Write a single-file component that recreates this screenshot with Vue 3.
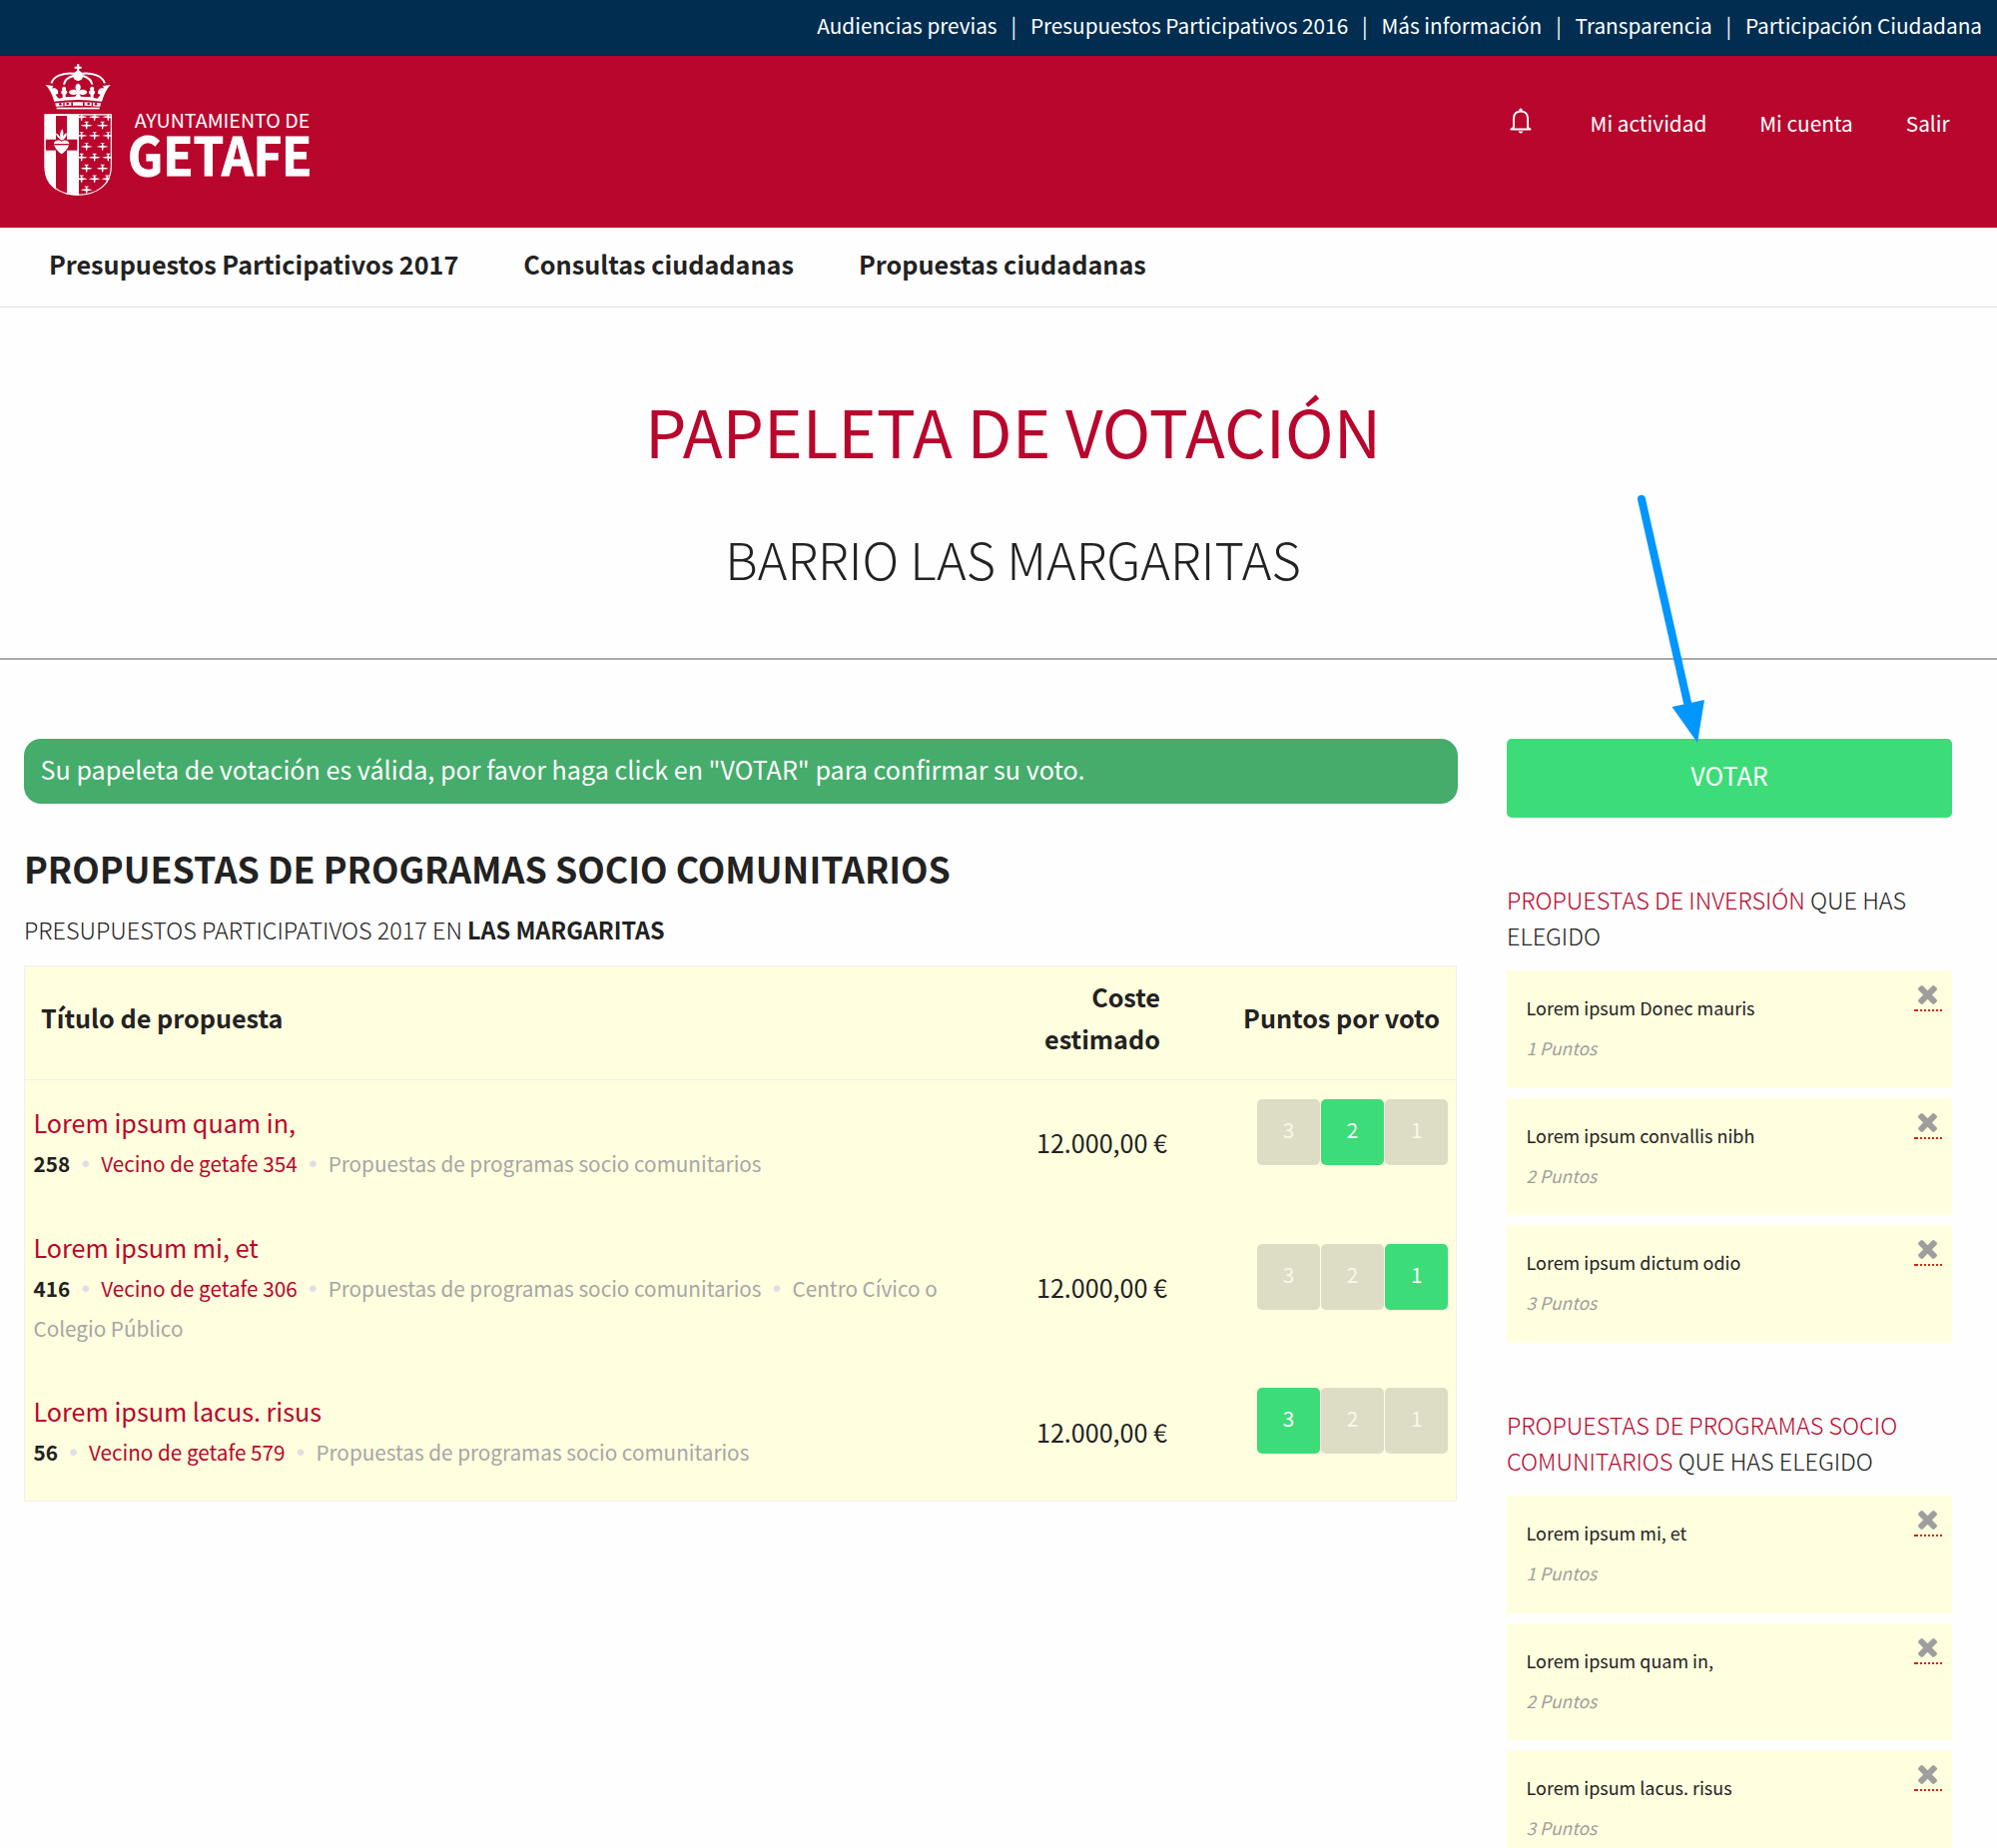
<script setup>
const topLinks = [
  'Audiencias previas',
  'Presupuestos Participativos 2016',
  'Más información',
  'Transparencia',
  'Participación Ciudadana',
]

const sections = ['Presupuestos Participativos 2017', 'Consultas ciudadanas', 'Propuestas ciudadanas']

const program = 'Propuestas de programas socio comunitarios'

const proposals = [
  { title: 'Lorem ipsum quam in,', id: 258, author: 'Vecino de getafe 354', tags: [program], price: '12.000,00 €', vote: 2 },
  { title: 'Lorem ipsum mi, et', id: 416, author: 'Vecino de getafe 306', tags: [program, 'Centro Cívico o Colegio Público'], price: '12.000,00 €', vote: 1 },
  { title: 'Lorem ipsum lacus. risus', id: 56, author: 'Vecino de getafe 579', tags: [program], price: '12.000,00 €', vote: 3 },
]

const ballots = [
  {
    name: 'PROPUESTAS DE INVERSIÓN',
    items: [
      { title: 'Lorem ipsum Donec mauris', points: 1 },
      { title: 'Lorem ipsum convallis nibh', points: 2 },
      { title: 'Lorem ipsum dictum odio', points: 3 },
    ],
  },
  {
    name: 'PROPUESTAS DE PROGRAMAS SOCIO COMUNITARIOS',
    items: [
      { title: 'Lorem ipsum mi, et', points: 1 },
      { title: 'Lorem ipsum quam in,', points: 2 },
      { title: 'Lorem ipsum lacus. risus', points: 3 },
    ],
  },
]

// Aeroplanes on the right half of the coat of arms
const planes = [
  [245, 232], [284, 232], [325, 232],
  [260, 257], [308, 257],
  [245, 288], [284, 288], [325, 288],
  [260, 321], [308, 321],
  [245, 353], [284, 353], [325, 353],
  [260, 386], [308, 386],
  [245, 418], [284, 418], [322, 418],
  [260, 451],
]
</script>

<template>
  <div class="page">
    <div class="topbar">
      <template v-for="(link, i) in topLinks" :key="link">
        <span v-if="i" class="sep">|</span>
        <a>{{ link }}</a>
      </template>
    </div>

    <header class="header">
      <svg class="logo" viewBox="0 48 960 516" width="320" height="172">
        <defs>
          <clipPath id="shield">
            <path d="M133 223H336V380C336 438 292 467 235 467C177 467 133 438 133 380Z" />
          </clipPath>
          <g id="plane">
            <path d="M-18 0Q-10 -3 -2.500 -3L-2 -8L-6 -9.500V-11.500H6V-9.500L2 -8L2.500 -3Q10 -3 18 0Q10 2.500 2.500 2.500L2 9L0 12L-2 9L-2.500 2.500Q-10 2.500 -18 0Z" />
          </g>
        </defs>
        <g fill="#fff">
          <path d="M231 73h7v7h7v6h-7v10h-7v-10h-7v-6h7z" />
          <circle cx="234.500" cy="108" r="15" />
          <g fill="none" stroke="#fff" stroke-width="6">
            <path d="M154 130C162 108 190 98 222 101" />
            <path d="M315 130C307 108 279 98 247 101" />
            <path d="M192 134C194 121 204 112 222 107" />
            <path d="M277 134C275 121 265 112 247 107" />
          </g>
          <path d="M137 135L160 138L156 146C166 141 178 150 174 162L167 164Q172 172 177 176L188 174V164C182 161 182 154 187 152C185 143 188 140 192 140C197 140 200 143 198 152C204 154 203 161 197 164V172L226 170L231 161C224 168 208 165 207 157C209 149 224 147 231 153C223 143 227 133 234.500 131C242 133 246 143 238 153C245 147 260 149 262 157C261 165 245 168 238 161L243 170L272 172V164C266 161 265 154 271 152C269 143 272 140 277 140C281 140 284 143 282 152C287 154 287 161 281 164V174L292 176Q297 172 302 164L295 162C291 150 303 141 313 146L309 138L332 135Q316 151 306 185Q234.500 175 163 185Q153 151 137 135Z" />
          <path d="M166 190Q234 184 303 190L301 200Q234 195 168 200Z" />
          <g fill="#b9062d">
            <circle cx="181" cy="193" r="4" /><circle cx="203" cy="192" r="4" />
            <circle cx="266" cy="192" r="4" /><circle cx="288" cy="193" r="4" />
            <rect x="190" y="187" width="4" height="11" /><rect x="214" y="187" width="5" height="11" />
            <rect x="249" y="187" width="5" height="11" /><rect x="275" y="187" width="4" height="11" />
          </g>
          <rect x="170" y="203" width="129" height="5" />
          <g clip-path="url(#shield)">
            <rect x="133" y="223" width="104" height="245" />
            <g fill="#b9062d">
              <rect x="168" y="228" width="33" height="234" />
              <rect x="137" y="299" width="95" height="33" />
            </g>
            <path d="M185 343C176 336 163 325 162 311C163 302 178 298 185 305C193 298 206 302 208 311C207 325 194 336 185 343Z" />
            <path d="M184 301C172 293 168 287 169 280C176 285 181 290 183 298C178 286 180 277 187 268C192 276 191 286 187 296C189 288 193 282 200 279C201 288 196 296 188 301Z" />
            <rect x="163" y="312" width="45" height="4" fill="#b9062d" />
            <use v-for="([x, y], i) in planes" :key="i" href="#plane" :x="x" :y="y" />
          </g>
          <path d="M135 224.500H334V380C334 436 290 465.500 235 465.500C179 465.500 135 436 135 380Z" fill="none" stroke="#fff" stroke-width="3.500" />
          <text class="logo-top" x="404" y="265" textLength="527" lengthAdjust="spacingAndGlyphs">AYUNTAMIENTO DE</text>
          <text class="logo-name" x="384" y="409" textLength="553" lengthAdjust="spacingAndGlyphs">GETAFE</text>
        </g>
      </svg>
      <nav class="account">
        <svg class="bell" viewBox="0 0 24 28" width="24" height="28" fill="none" stroke="#fff" stroke-width="2">
          <path d="M5 20.500V11.500C5 7 8 4.500 12 4.500S19 7 19 11.500V20.500L21.500 22.500H2.500Z" stroke-linejoin="round" />
          <path d="M10.500 4V2.200Q12 .6 13.500 2.200V4ZM9.500 24.500H14.500Q13.500 26.500 12 26.500T9.500 24.500Z" fill="#fff" stroke="none" />
        </svg>
        <a>Mi actividad</a>
        <a>Mi cuenta</a>
        <a>Salir</a>
      </nav>
    </header>

    <nav class="sections">
      <a v-for="s in sections" :key="s">{{ s }}</a>
    </nav>

    <div class="hero">
      <h1>PAPELETA DE VOTACIÓN</h1>
      <h2>BARRIO LAS MARGARITAS</h2>
    </div>

    <div class="content">
      <main class="main">
        <div class="notice">Su papeleta de votación es válida, por favor haga click en "VOTAR" para confirmar su voto.</div>
        <h3>PROPUESTAS DE PROGRAMAS SOCIO COMUNITARIOS</h3>
        <p class="subtitle">PRESUPUESTOS PARTICIPATIVOS 2017 EN <strong>LAS MARGARITAS</strong></p>

        <div class="table">
          <div class="thead">
            <div class="th-title">Título de propuesta</div>
            <div class="th-cost">Coste estimado</div>
            <div class="th-points">Puntos por voto</div>
          </div>
          <div v-for="p in proposals" :key="p.id" class="row">
            <div class="proposal">
              <a class="title">{{ p.title }}</a>
              <p class="meta">
                <strong>{{ p.id }}</strong><span class="dot">•</span><a>{{ p.author }}</a><template v-for="t in p.tags" :key="t"><span class="dot">•</span>{{ t }}</template>
              </p>
            </div>
            <div class="price">{{ p.price }}</div>
            <div class="points">
              <span v-for="n in [3, 2, 1]" :key="n" class="point" :class="{ active: n === p.vote }">{{ n }}</span>
            </div>
          </div>
        </div>
      </main>

      <aside class="sidebar">
        <div class="vote">
          VOTAR
          <svg class="arrow" viewBox="0 0 80 250" width="80" height="250">
            <path d="M14 10L60.500 216" stroke="#0096ff" stroke-width="8" stroke-linecap="round" />
            <path d="M44.500 218L77 211L70 254Z" fill="#0096ff" />
          </svg>
        </div>
        <section v-for="b in ballots" :key="b.name" class="ballot">
          <h4><span>{{ b.name }}</span> QUE HAS ELEGIDO</h4>
          <div v-for="item in b.items" :key="item.title" class="card">
            <div>
              <div class="card-title">{{ item.title }}</div>
              <div class="card-points">{{ item.points }} Puntos</div>
            </div>
            <a class="remove">
              <svg viewBox="302 366 1188 1188" width="19" height="19" fill="#9e9e9e">
                <path d="M1490 1322q0 40-28 68l-136 136q-28 28-68 28t-68-28l-294-294-294 294q-28 28-68 28t-68-28l-136-136q-28-28-28-68t28-68l294-294-294-294q-28-28-28-68t28-68l136-136q28-28 68-28t68 28l294 294 294-294q28-28 68-28t68 28l136 136q28 28 28 68t-28 68l-294 294 294 294q28 28 28 68z" />
              </svg>
            </a>
          </div>
        </section>
      </aside>
    </div>
  </div>
</template>

<style>
html,
body {
  margin: 0;
  background: #fff;
}
</style>

<style scoped>
.page {
  width: 2000px;
  height: 1851px;
  overflow: hidden;
  background: #fefefe;
  color: #222;
  font-family: 'Noto Sans CJK SC', 'Noto Sans', sans-serif;
  font-size: 25.15px;
}
h1, h2, h3, h4, p {
  margin: 0;
}
.topbar {
  display: flex;
  justify-content: flex-end;
  height: 56px;
  padding-right: 15px;
  background: #002d50;
  color: #fff;
  font-size: 20.75px;
  line-height: 50px;
}
.sep {
  width: 33.3px;
  text-align: center;
}
.header {
  display: flex;
  justify-content: space-between;
  height: 172px;
  background: #b9062d;
  color: #fff;
}
.logo {
  display: block;
  overflow: visible;
}
.logo-top {
  font-size: 57px;
}
.logo-name {
  font-size: 158px;
  font-weight: 700;
  stroke: #fff;
  stroke-width: 3px;
}
.account {
  display: flex;
  height: 50px;
  margin-top: 42px;
  padding-right: 47.5px;
  font-size: 20.75px;
  line-height: 51px;
}
.account a {
  margin-left: 53px;
}
.bell {
  margin: 9px 4.500px 0 0;
}
.sections {
  display: flex;
  gap: 65px;
  height: 79px;
  padding-left: 49px;
  border-bottom: 1px solid #dedede;
  font-size: 25.2px;
  font-weight: 700;
  line-height: 72px;
}
.hero {
  height: 273px;
  padding: 78px 0 0 29px;
  border-bottom: 2px solid #a9a9a9;
  text-align: center;
}
.hero h1 {
  color: #b9062d;
  font-size: 65.5px;
  font-weight: 400;
  line-height: 90px;
}
.hero h2 {
  margin-top: 48px;
  font-size: 50.5px;
  font-weight: 300;
  line-height: 70px;
}
.content {
  display: flex;
  align-items: flex-start;
  padding: 79px 45px 0 24px;
}
.main {
  width: 1436px;
}
.notice {
  height: 65px;
  padding-left: 16.5px;
  border-radius: 17px;
  background: #45ac6b;
  color: #fff;
  line-height: 60px;
}
h3 {
  margin-top: 39px;
  font-size: 35.78px;
  font-weight: 700;
  line-height: 51px;
}
.subtitle {
  margin: 16px 0 16px;
  font-size: 23.4px;
  font-weight: 300;
  line-height: 40px;
}
.subtitle strong {
  font-weight: 700;
}
.table {
  width: 1433px;
  padding-bottom: 6px;
  border: 1px solid #f0f0ee;
  background: #fffede;
}
.thead,
.row {
  display: grid;
  grid-template-columns: 952px 192px 1fr;
  align-items: center;
}
.thead {
  height: 84px;
  margin-bottom: 1px;
  padding: 9px 0 20px;
  border-bottom: 1px solid #f0f0ee;
  font-size: 25.2px;
  font-weight: 700;
  line-height: 42px;
}
.th-title {
  padding-left: 16px;
}
.th-cost {
  width: 120px;
  justify-self: end;
  padding-right: 7px;
  text-align: right;
}
.th-points {
  padding-right: 16px;
  text-align: right;
}
.row {
  padding: 20px 0 22px;
}
.proposal {
  padding: 0 16px 0 8.5px;
}
.title {
  display: block;
  line-height: 43px;
}
.meta {
  color: #a6a6a6;
  font-size: 20.7px;
  line-height: 39.8px;
}
.meta strong {
  color: #222;
}
.meta a,
.title {
  color: #b9062d;
}
.dot {
  display: inline-block;
  width: 31px;
  color: #dedee6;
  font-family: 'Liberation Sans', sans-serif;
  font-size: 24px;
  line-height: 20px;
  text-align: center;
}
.price {
  font-size: 25.1px;
  line-height: 42px;
  text-align: right;
}
.points {
  display: flex;
  justify-content: flex-end;
  gap: 1.4px;
  margin: -21px 8px 0 0;
}
.point {
  width: 62.7px;
  height: 66px;
  border-radius: 5px;
  background: #ddddc6;
  color: #f9f9e4;
  font-size: 20.8px;
  line-height: 60px;
  text-align: center;
}
.point.active {
  background: #3cdc78;
  color: #fff;
}
.sidebar {
  width: 446px;
  margin-left: 49px;
}
.vote {
  position: relative;
  height: 79px;
  border-radius: 5px;
  background: #3cdc78;
  color: #fff;
  line-height: 72px;
  text-align: center;
}
.arrow {
  position: absolute;
  left: 121px;
  top: -250px;
  overflow: visible;
}
.ballot {
  padding-top: 64px;
}
.ballot + .ballot {
  padding-top: 64.3px;
}
h4 {
  margin-bottom: 17px;
  font-size: 23.42px;
  font-weight: 300;
  line-height: 36px;
}
h4 span {
  color: #b9062d;
}
.card {
  display: flex;
  justify-content: space-between;
  height: 100.6px;
  padding: 17px 10px 0 19.5px;
  background: #fffede;
  font-size: 17.97px;
  line-height: 40px;
}
.card + .card {
  margin-top: 10px;
}
.card-points {
  color: #9e9e9e;
  font-size: 17.4px;
  font-style: italic;
  line-height: 42px;
}
.remove {
  display: flex;
  justify-content: center;
  width: 28px;
  height: 26px;
  margin-top: -2px;
  background:
    linear-gradient(#d0280f, #d0280f) 0 100% / 2px 2px no-repeat,
    repeating-linear-gradient(90deg, transparent 0 2px, #d0280f 2px 4px) 0 100% / 28px 2px no-repeat;
}
.remove svg {
  display: block;
  margin-right: 1px;
}
</style>
